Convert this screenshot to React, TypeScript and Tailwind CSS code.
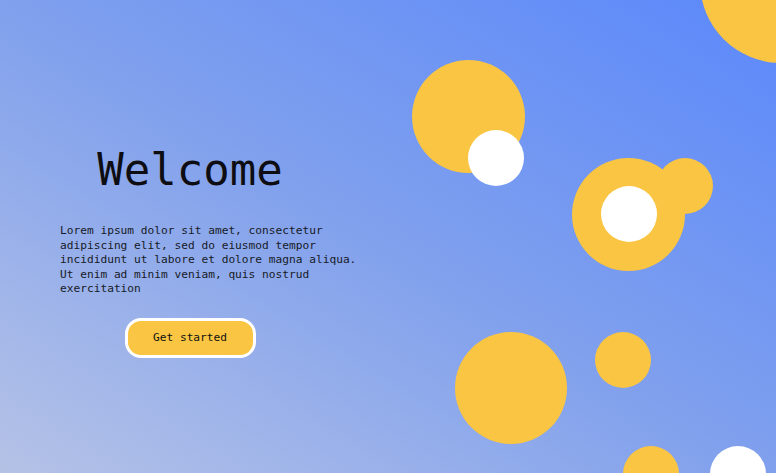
const mono = { fontFamily: '"DejaVu Sans Mono", "Liberation Mono", monospace' };

const Bubbles = () => (
  <div className="pointer-events-none absolute inset-0">
    {/* top right, cut off */}
    <div className="absolute left-[700px] top-[-99px] h-[162px] w-[162px] rounded-full bg-[#f9c542]" />
    {/* big pair */}
    <div className="absolute left-[412px] top-[60px] h-[113px] w-[113px] rounded-full bg-[#f9c542]" />
    <div className="absolute left-[468px] top-[130px] h-[56px] w-[56px] rounded-full bg-white" />
    {/* ring with bump */}
    <div className="absolute left-[657px] top-[158px] h-[56px] w-[56px] rounded-full bg-[#f9c542]" />
    <div className="absolute left-[572px] top-[158px] h-[113px] w-[113px] rounded-full bg-[#f9c542]" />
    <div className="absolute left-[601px] top-[186px] h-[56px] w-[56px] rounded-full bg-white" />
    {/* bottom */}
    <div className="absolute left-[455px] top-[332px] h-[112px] w-[112px] rounded-full bg-[#f9c542]" />
    <div className="absolute left-[595px] top-[332px] h-[56px] w-[56px] rounded-full bg-[#f9c542]" />
    <div className="absolute left-[623px] top-[446px] h-[56px] w-[56px] rounded-full bg-[#f9c542]" />
    <div className="absolute left-[710px] top-[446px] h-[56px] w-[56px] rounded-full bg-white" />
  </div>
);

const App = () => {
  return (
    <section className="relative flex h-[473px] w-full overflow-hidden bg-linear-to-tr from-[#b5c2e6] via-[#80a0ed] to-[#5b88fb]">
      <Bubbles />
      <div className="relative flex flex-col pl-[60px] pt-[148px]" style={mono}>
        <h1 className="w-[260px] text-center text-[44px] leading-[44px] font-normal text-[#0d0d12]">
          Welcome
        </h1>
        <p className="mt-[32px] w-[310px] text-[11.2px] leading-[14.6px] text-[#171a26]">
          Lorem ipsum dolor sit amet, consectetur adipiscing elit, sed do eiusmod tempor incididunt ut labore et dolore magna aliqua. Ut enim ad minim veniam, quis nostrud exercitation
        </p>
        <div className="mt-[21px] flex w-[260px] justify-center">
          <button className="h-[40px] w-[131px] rounded-[16px] border-[3px] border-white bg-[#f9c542] text-[11.2px] text-[#111]">
            Get started
          </button>
        </div>
      </div>
    </section>
  );
};

export default App;
